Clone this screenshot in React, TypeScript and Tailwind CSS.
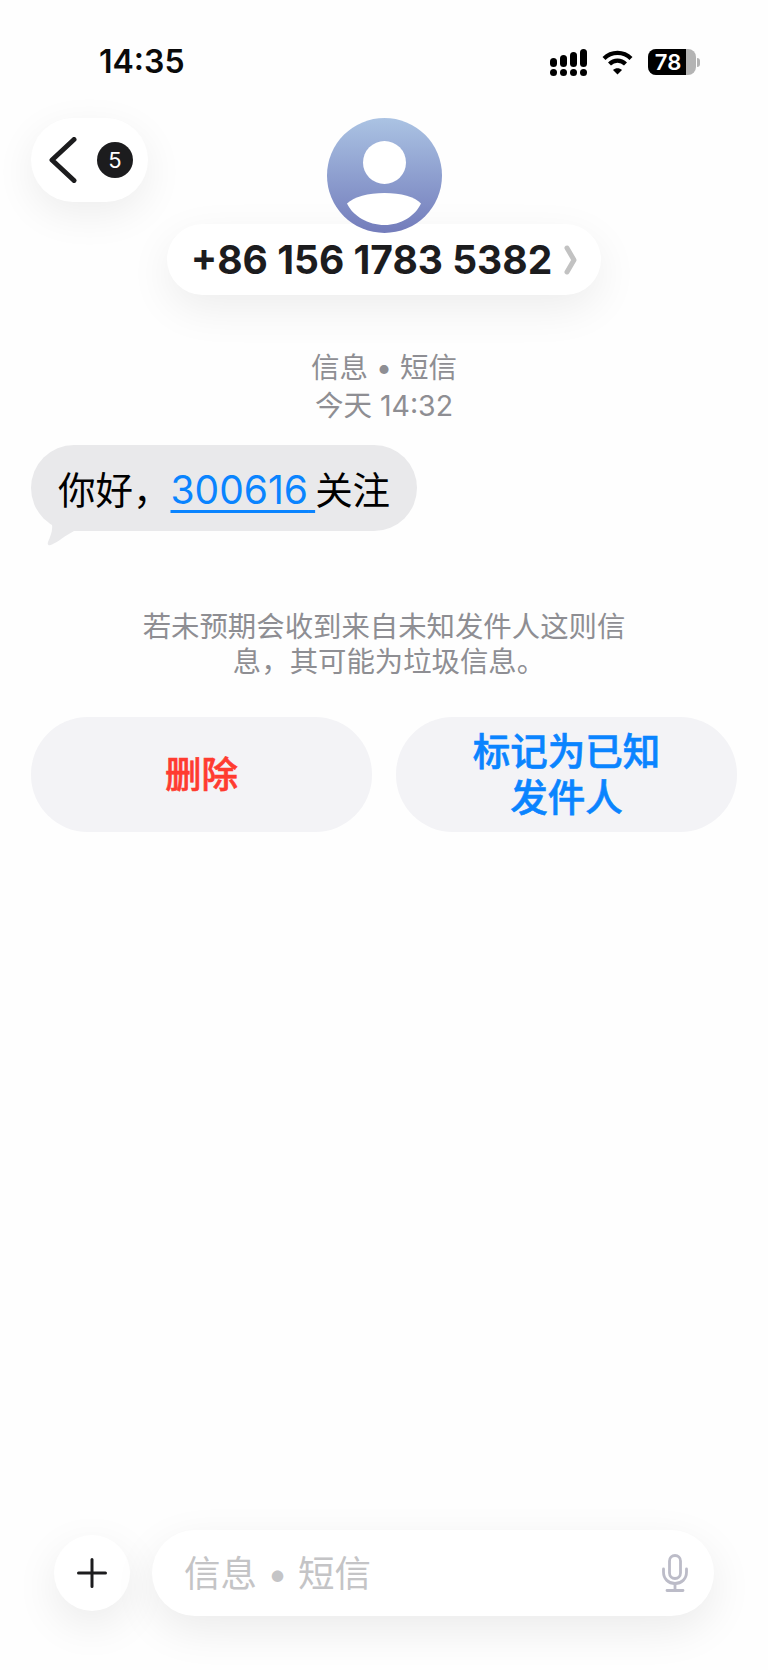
const sans = "font-['Inter','Noto_Sans_CJK_SC',sans-serif]";

function SignalIcon() {
  return (
    <svg width="37" height="27" viewBox="0 0 37 27" fill="#000">
      <rect x="0" y="9" width="7" height="9" rx="3.5" />
      <rect x="10" y="6" width="7" height="12" rx="3.5" />
      <rect x="20" y="3" width="7" height="15" rx="3.5" />
      <rect x="30" y="0" width="7" height="18" rx="3.5" />
      <circle cx="3.5" cy="23.5" r="3.5" />
      <circle cx="13.5" cy="23.5" r="3.5" />
      <circle cx="23.5" cy="23.5" r="3.5" />
      <circle cx="33.5" cy="23.5" r="3.5" />
    </svg>
  );
}

function WifiIcon() {
  return (
    <svg width="31" height="25" viewBox="0 0 31 25" fill="none" stroke="#000" strokeWidth="4.2">
      <path d="M2 8.5C9.5 1 21.5 1 29 8.5" />
      <path d="M7.5 14C12 9.5 19 9.5 23.5 14" />
      <path d="M11 20l4.5 4.5 4.5-4.5c-2.500-2.500-6.500-2.500-9 0z" fill="#000" stroke="none" />
    </svg>
  );
}

function Battery() {
  return (
    <div className="flex items-center gap-[1px]">
      <div className="flex h-[26px] w-[48px] rounded-[8px] bg-[#b4b4b4]">
        <div className="flex h-full w-[38px] items-center justify-center rounded-l-[8px] bg-black pl-[2px]">
          <span className="text-[22px] font-semibold leading-[26px] text-white">78</span>
        </div>
      </div>
      <div className="h-[9px] w-[3px] rounded-r-full bg-[#b4b4b4]" />
    </div>
  );
}

function Avatar() {
  return (
    <div className="relative z-10 h-[115px] w-[115px] rounded-full bg-gradient-to-b from-[#abc3e3] to-[#737cbb]">
      <svg width="115" height="115" viewBox="0 0 115 115" fill="#fff">
        <circle cx="57.500" cy="44.500" r="21.500" />
        <path d="M20 85.500C27 79 41 75 57.500 75S88 79 94 85.500C88 98 74 107 57.500 107S26 98 20 85.500Z" />
      </svg>
    </div>
  );
}

function BubbleTail() {
  return (
    <svg
      className="absolute left-[10px] top-[60px]"
      width="40"
      height="45"
      viewBox="0 0 40 45"
      fill="#e9e9eb"
    >
      <path d="M0 0L11 20C12 26 9 32 7 37C6 40 8 41 11 39.500C17 37 25 30 33 26V0Z" />
    </svg>
  );
}

export default function App() {
  return (
    <div className={`flex h-[1670px] w-[768px] flex-col overflow-hidden bg-[#fefefe] ${sans}`}>
      {/* status bar */}
      <div className="mt-[49px] flex h-[26px] items-center justify-between pl-[99px] pr-[68px]">
        <span className="text-[32px] font-semibold leading-none text-[#0a0a0a]">14:35</span>
        <div className="flex items-center gap-[15px]">
          <SignalIcon />
          <WifiIcon />
          <Battery />
        </div>
      </div>

      {/* header */}
      <div className="mt-[43px] grid grid-cols-[1fr_auto_1fr]">
        <div className="pl-[31px]">
          <div className="flex h-[84px] w-[117px] items-center rounded-full bg-white pl-[18px] shadow-[0_12px_40px_rgba(0,0,0,0.07)]">
            <svg width="28" height="46" viewBox="0 0 28 46" fill="none" stroke="#1c1c1e" strokeWidth="5" strokeLinecap="round" strokeLinejoin="round">
              <path d="M25 2.500L3 23l22 20.500" />
            </svg>
            <div className="ml-[20px] flex h-[36px] w-[36px] items-center justify-center rounded-full bg-[#1c1c1e] text-[22px] leading-none text-white">
              5
            </div>
          </div>
        </div>
        <div className="flex flex-col items-center">
          <Avatar />
          <div className="-mt-[9px] flex h-[71px] w-[434px] items-center justify-center gap-[12px] rounded-full bg-white shadow-[0_14px_44px_rgba(0,0,0,0.07)]">
            <span className="text-[39px] font-bold leading-none text-[#1c1c1e]">+86 156 1783 5382</span>
            <svg width="13" height="30" viewBox="0 0 13 30" fill="none" stroke="#c2c2c2" strokeWidth="5" strokeLinecap="round" strokeLinejoin="round">
              <path d="M3 3l7 12-7 12" />
            </svg>
          </div>
        </div>
        <div />
      </div>

      {/* thread */}
      <div className="mt-[54px] text-center text-[28.500px] leading-[38px] text-[#8e8e93]">
        <div>信息 • 短信</div>
        <div>今天 14:32</div>
      </div>

      <div className="relative ml-[31px] mt-[20px] flex h-[86px] w-[386px] items-center rounded-[43px] bg-[#e9e9eb] pl-[27px] pt-[3px]">
        <BubbleTail />
        <span className="relative text-[37.500px] leading-none text-black">
          你好，
          <span className="text-[39px] text-[#0a84ff] underline decoration-[2.500px] underline-offset-[6px]">300616{"\u2009"}</span>
          关注
        </span>
      </div>

      <div className="mt-[78px] text-center text-[28.400px] leading-[35px] text-[#8e8e93]">
        <p>若未预期会收到来自未知发件人这则信</p>
        <p className="pl-[10px]">息，其可能为垃圾信息。</p>
      </div>

      <div className="mt-[38px] flex gap-[24px] px-[31px]">
        <button className="flex h-[115px] w-0 flex-1 items-center justify-center rounded-[57px] bg-[#f3f3f6] pt-[1px] text-[36.500px] font-medium leading-[46px] text-[#ff3b30] [-webkit-text-stroke:0.6px_currentColor]">
          删除
        </button>
        <button className="flex h-[115px] w-0 flex-1 flex-col items-center justify-center rounded-[57px] bg-[#f3f3f6] pt-[1px] text-[37.500px] font-medium leading-[46px] text-[#0a84ff] [-webkit-text-stroke:0.6px_currentColor]">
          <span>标记为已知</span>
          <span>发件人</span>
        </button>
      </div>

      <div className="flex-1" />

      {/* composer */}
      <div className="mb-[54px] flex items-center gap-[22px] px-[54px]">
        <div className="flex h-[76px] w-[76px] shrink-0 items-center justify-center rounded-full bg-white shadow-[0_14px_44px_rgba(0,0,0,0.08)]">
          <svg width="30" height="30" viewBox="0 0 30 30" stroke="#1c1c1e" strokeWidth="3" strokeLinecap="round">
            <path d="M15 1.500v27M1.500 15h27" />
          </svg>
        </div>
        <div className="flex h-[86px] flex-1 items-center justify-between rounded-full bg-white pl-[32px] pr-[26px] shadow-[0_14px_44px_rgba(0,0,0,0.08)]">
          <span className="pt-[2px] text-[36.500px] leading-none text-[#c4c4c6]">信息 • 短信</span>
          <svg width="26" height="38" viewBox="0 0 26 38" fill="none" stroke="#bcbcc8" strokeWidth="2.800" strokeLinecap="round">
            <rect x="7.500" y="1.500" width="11" height="23" rx="5.500" />
            <path d="M1.500 15v3c0 7 5 11.500 11.500 11.500S24.500 25 24.500 18v-3" />
            <path d="M13 29.500v6M5 36.500h16" />
          </svg>
        </div>
      </div>
    </div>
  );
}
